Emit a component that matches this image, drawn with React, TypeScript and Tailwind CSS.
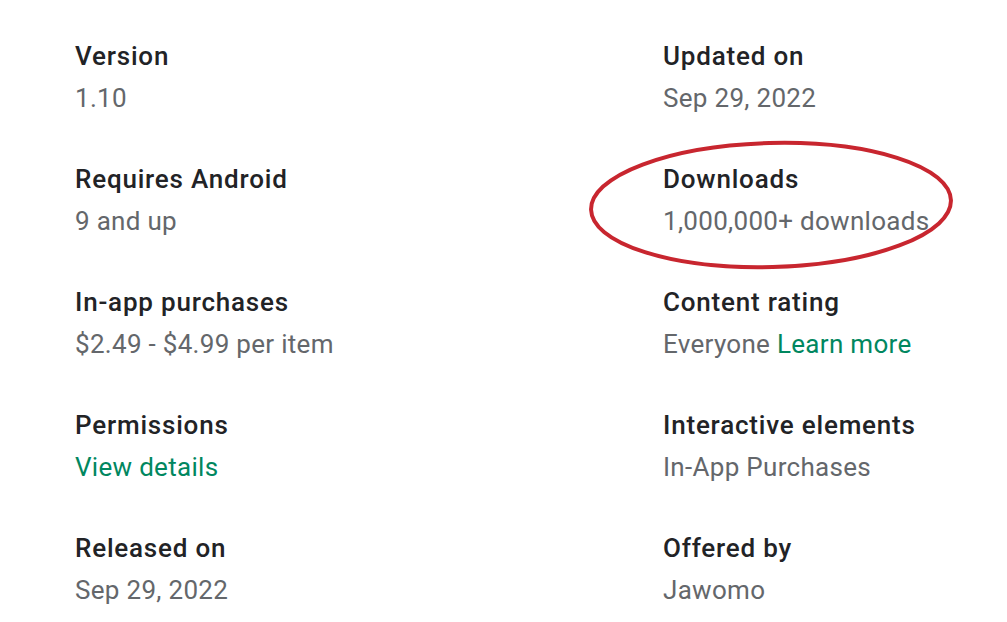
const left = [
  { label: 'Version', value: <>1.10</> },
  { label: 'Requires Android', value: <>9 and up</> },
  { label: 'In-app purchases', value: <>$2.49 - $4.99 per item</> },
  { label: 'Permissions', value: <span className="text-[#01875f]">View details</span> },
  { label: 'Released on', value: <>Sep 29, 2022</> },
];

const right = [
  { label: 'Updated on', value: <>Sep 29, 2022</> },
  { label: 'Downloads', value: <>1,000,000+ downloads</> },
  {
    label: 'Content rating',
    value: (
      <>
        Everyone <span className="text-[#01875f]">Learn more</span>
      </>
    ),
  },
  { label: 'Interactive elements', value: <>In-App Purchases</> },
  { label: 'Offered by', value: <>Jawomo</> },
];

function Item({ label, value }: { label: string; value: React.ReactNode }) {
  return (
    <div className="flex flex-col">
      <div className="leading-[42px] font-medium tracking-[0.8px] text-[#222326]">{label}</div>
      <div className="leading-[42px] tracking-[0.3px] text-[#64676b]">{value}</div>
    </div>
  );
}

export default function App() {
  return (
    <div
      className="relative w-[1007px] h-[622px] bg-white overflow-hidden pl-[75px] pt-[35px] text-[26px]"
      style={{ fontFamily: 'Roboto, "Noto Sans", sans-serif' }}
    >
      <div className="grid grid-cols-[588px_1fr]">
        <div className="flex flex-col gap-[39px]">
          {left.map((it) => (
            <Item key={it.label} {...it} />
          ))}
        </div>
        <div className="flex flex-col gap-[39px]">
          {right.map((it) => (
            <Item key={it.label} {...it} />
          ))}
        </div>
      </div>

      {/* hand-drawn highlight round "Downloads" */}
      <svg className="absolute left-0 top-0 pointer-events-none" width="1007" height="622" viewBox="0 0 1007 622">
        <ellipse
          cx="771"
          cy="205"
          rx="180"
          ry="62"
          transform="rotate(-1.5 771 205)"
          fill="none"
          stroke="#c8262f"
          strokeWidth="4"
        />
      </svg>
    </div>
  );
}
